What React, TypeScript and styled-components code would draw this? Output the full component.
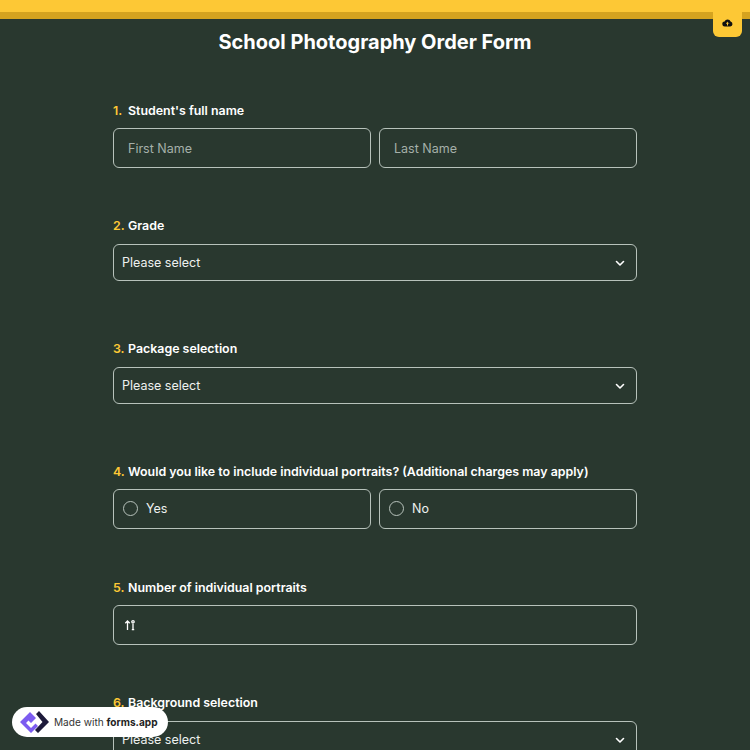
import React from "react";
import styled, { createGlobalStyle } from "styled-components";

const Global = createGlobalStyle`
  html, body { margin: 0; padding: 0; height: 750px; overflow: hidden; background: #29382f; }
  body { font-family: Inter, "Noto Sans", sans-serif; color: #fff; }
  * { box-sizing: border-box; }
`;

const Page = styled.div`
  position: relative;
  width: 750px;
  height: 750px;
  overflow: hidden;
  background: #29382f;
`;

const TopBar = styled.div`
  height: 19px;
  background: #fdc835;
  border-bottom: 7px solid #d5a31f;
`;

const SaveTab = styled.div`
  position: absolute;
  top: 12px;
  right: 8px;
  width: 29px;
  height: 25px;
  background: #fdc835;
  border-radius: 0 0 6px 6px;
  display: flex;
  align-items: center;
  justify-content: center;
  padding-bottom: 4px;
`;

const Title = styled.h1`
  margin: 9px 0 0;
  height: 28px;
  font-size: 20px;
  line-height: 28px;
  font-weight: 700;
  text-align: center;
`;

const Form = styled.main`
  width: 524px;
  margin: 0 auto;
  padding-top: 45px;
  display: flex;
  flex-direction: column;
`;

const Question = styled.section<{ $gap: number }>`
  display: flex;
  flex-direction: column;
  margin-bottom: ${(p) => p.$gap}px;
`;

const Label = styled.div`
  height: 18px;
  line-height: 20px;
  font-size: 12.4px;
  font-weight: 600;
  margin-bottom: 9px;
  white-space: nowrap;
  display: flex;
`;

const Num = styled.span`
  color: #fdc835;
  width: 15px;
`;

const Row = styled.div`
  display: grid;
  grid-template-columns: 1fr 1fr;
  gap: 8px;
`;

const Field = styled.div<{ $h?: number }>`
  height: ${(p) => p.$h ?? 40}px;
  border: 1px solid #b7c2bb;
  border-radius: 6px;
  display: flex;
  align-items: center;
  font-size: 12.5px;
`;

const TextInput = styled(Field)`
  padding-left: 14px;
  color: #a5b0a9;
`;

const Select = styled(Field)`
  margin-top: 1px;
  padding: 0 10px 0 8px;
  justify-content: space-between;
  color: #eef1ef;
`;

const Radio = styled(Field)`
  padding: 0 0 1px 9px;
  gap: 8px;
  color: #eef1ef;
`;

const Circle = styled.span`
  width: 15px;
  height: 15px;
  border: 1px solid #b7c2bb;
  border-radius: 50%;
`;

const NumberInput = styled(Field)`
  padding-left: 10px;
`;

const Badge = styled.div`
  position: absolute;
  left: 12px;
  top: 707px;
  width: 156px;
  height: 30px;
  background: #fff;
  border-radius: 15px;
  display: flex;
  align-items: center;
  padding-left: 7px;
  gap: 5px;
  font-size: 10.1px;
  color: #333;
  white-space: nowrap;
`;

const Brand = styled.b`
  font-weight: 700;
  color: #222;
`;

const Chevron = () => (
  <svg width="12" height="12" viewBox="0 0 12 12" fill="none" stroke="#fff" strokeWidth="1.6" strokeLinecap="round" strokeLinejoin="round">
    <path d="M2.5 4.5 6 8l3.5-3.5" />
  </svg>
);

const Logo = () => (
  <svg width="30" height="24" viewBox="0 0 30 24">
    <path d="M1 12 11 2l6 6-5 5-2.5-2.5L7 13l5 5 4.5-4.5L19 16l-7 7Z" fill="#7c5cf0" />
    <path d="M17 4l3-3 10 11-11 11-3-3 7.5-8Z" fill="#1d1a3a" />
  </svg>
);

const App = () => (
  <Page>
    <Global />
    <TopBar />
    <SaveTab>
      <svg width="11" height="9" viewBox="0 0 11 9">
        <path d="M3 8.5a2.5 2.5 0 0 1-.4-5A3.2 3.2 0 0 1 8.6 3.6 2.5 2.5 0 0 1 8.3 8.5Z" fill="#111" />
        <path d="M5.5 7.5V4.5M4.2 5.6l1.3-1.3 1.3 1.3" stroke="#fdc835" strokeWidth="1" fill="none" />
      </svg>
    </SaveTab>
    <Title>School Photography Order Form</Title>
    <Form>
      <Question $gap={48}>
        <Label><Num>1.</Num>Student's full name</Label>
        <Row>
          <TextInput>First Name</TextInput>
          <TextInput>Last Name</TextInput>
        </Row>
      </Question>
      <Question $gap={58}>
        <Label><Num>2.</Num>Grade</Label>
        <Select $h={37}>Please select<Chevron /></Select>
      </Question>
      <Question $gap={58}>
        <Label><Num>3.</Num>Package selection</Label>
        <Select $h={37}>Please select<Chevron /></Select>
      </Question>
      <Question $gap={49}>
        <Label><Num>4.</Num>Would you like to include individual portraits? (Additional charges may apply)</Label>
        <Row>
          <Radio><Circle />Yes</Radio>
          <Radio><Circle />No</Radio>
        </Row>
      </Question>
      <Question $gap={48}>
        <Label><Num>5.</Num>Number of individual portraits</Label>
        <NumberInput>
          <svg width="12" height="12" viewBox="0 0 12 12" fill="none" stroke="#fff" strokeWidth="1.3">
            <path d="M3.5 11V2M1.3 4.2 3.5 2l2.2 2.2" />
            <path d="M9 5v5.5M7.8 10.7h2.4" />
            <circle cx="9" cy="2.8" r="1.2" />
          </svg>
        </NumberInput>
      </Question>
      <Question $gap={0}>
        <Label><Num>6.</Num>Background selection</Label>
        <Select $h={37}>Please select<Chevron /></Select>
      </Question>
    </Form>
    <Badge>
      <Logo />
      <span>Made with <Brand>forms.app</Brand></span>
    </Badge>
  </Page>
);

export default App;
